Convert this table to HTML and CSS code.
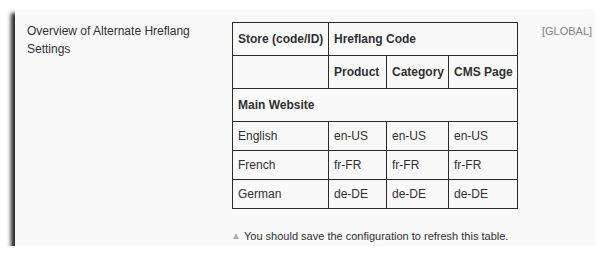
FILE: index.html
```html
<!DOCTYPE html>
<html>
<head>
<meta charset="utf-8">
<link rel="stylesheet" href="styles.css">
</head>
<body>
<div class="panel">
  <div class="label">Overview of Alternate Hreflang Settings</div>
  <div class="value">
    <table class="grid">
      <colgroup>
        <col class="c1"><col class="c2"><col class="c3"><col class="c4">
      </colgroup>
      <tr class="hrow"><th>Store (code/ID)</th><th colspan="3">Hreflang Code</th></tr>
      <tr class="hrow"><th></th><th>Product</th><th>Category</th><th>CMS Page</th></tr>
      <tr class="hrow"><th colspan="4">Main Website</th></tr>
      <tr><td>English</td><td>en-US</td><td>en-US</td><td>en-US</td></tr>
      <tr><td>French</td><td>fr-FR</td><td>fr-FR</td><td>fr-FR</td></tr>
      <tr><td>German</td><td>de-DE</td><td>de-DE</td><td>de-DE</td></tr>
    </table>
    <p class="note"><span class="tri"></span>You should save the configuration to refresh this table.</p>
  </div>
  <div class="scope">[GLOBAL]</div>
</div>
</body>
</html>
```

FILE: styles.css
```css
html, body {
  margin: 0;
  padding: 0;
  background: #ffffff;
}
body {
  font-family: "Liberation Sans", Arial, sans-serif;
  color: #303030;
  padding: 9px 8px 0 15px;
}
.panel {
  width: 580px;
  height: 237px;
  box-sizing: border-box;
  background: #f9f9f9;
  box-shadow: -4px 4px 4px rgba(0, 0, 0, 0.85);
  display: flex;
  padding: 13px 0 0 12px;
}
.label {
  width: 205px;
  font-size: 12px;
  line-height: 18px;
  color: #303030;
}
.value {
  width: 310px;
}
.grid {
  border-collapse: collapse;
  table-layout: fixed;
  width: 285px;
  font-size: 12px;
  color: #303030;
}
.c1 { width: 96px; }
.c2 { width: 58px; }
.c3 { width: 62px; }
.c4 { width: 69px; }
.grid th, .grid td {
  border: 1px solid #2b2b2b;
  text-align: left;
  padding: 0 5px;
  white-space: nowrap;
}
.grid th {
  font-weight: bold;
  height: 32px;
}
.grid td {
  height: 28px;
}
.note {
  margin: 20px 0 0 1px;
  font-size: 11px;
  line-height: 14px;
  color: #303030;
  display: flex;
  align-items: center;
}
.tri {
  width: 0;
  height: 0;
  border-left: 3.5px solid transparent;
  border-right: 3.5px solid transparent;
  border-bottom: 6px solid #a7b0b8;
  margin-right: 5px;
}
.scope {
  font-size: 11px;
  line-height: 18px;
  color: #808080;
}
```
